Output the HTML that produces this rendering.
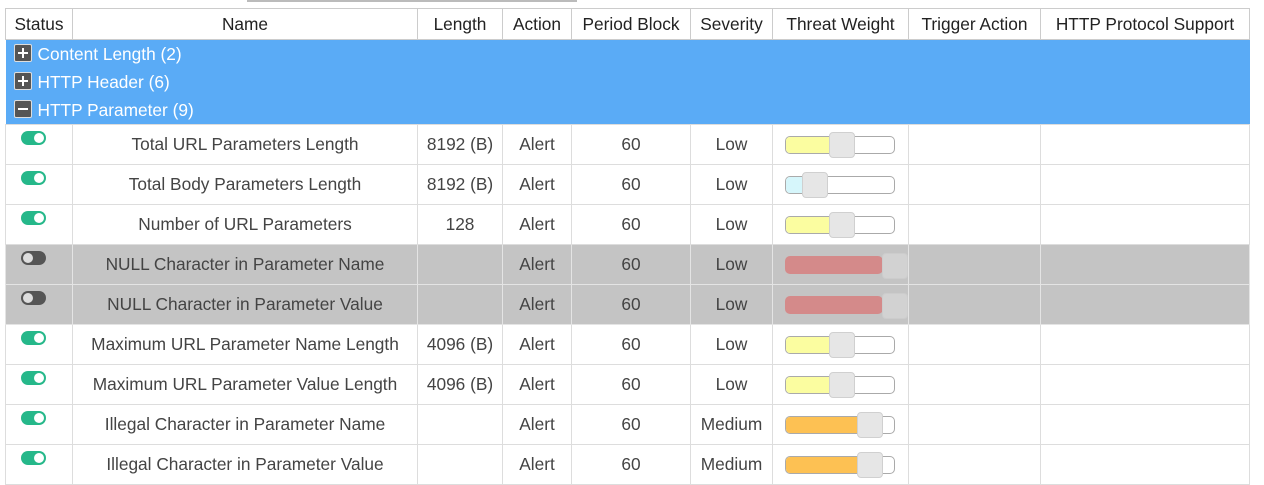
<!DOCTYPE html>
<html><head><meta charset="utf-8"><style>
body{margin:0;width:1264px;height:484px;overflow:hidden;background:#fff;font-family:"Liberation Sans",sans-serif;color:#333}
.topline{position:absolute;left:247px;top:0;width:330px;height:2px;background:#bbb}
table{position:absolute;left:5px;top:8px;border-collapse:collapse;table-layout:fixed;width:1245px}
td,th{border:1px solid #ddd;text-align:center;font-size:17.3px;padding:0;white-space:nowrap;overflow:hidden}
th{font-weight:normal;height:30px;border-color:#ccc;color:#222}
tr.g td{background:#5aabf6;color:#fff;text-align:left;height:28px;border:none;padding-left:8px}
tr.d td{height:39px;color:#444}
tr.off td{background:#c4c4c4;border-color:#e4e4e4}
.pm{display:inline-block;width:16px;height:16px;background:#555;border:1px solid #ddd;vertical-align:-2px;margin-right:6px;position:relative;border-radius:2px}
.pm:before{content:"";position:absolute;left:3px;top:7px;width:10px;height:2px;background:#fff}
.pm.p:after{content:"";position:absolute;left:7px;top:3px;width:2px;height:10px;background:#fff}
.tg{display:inline-block;width:25px;height:14px;border-radius:7px;background:#26b88a;position:relative;left:-6px;vertical-align:top;margin-top:-3px}
.tg:after{content:"";position:absolute;right:2px;top:2px;width:10px;height:10px;border-radius:50%;background:#fff}
.tg.o{background:#555}.tg.o:after{right:auto;left:2px;background:#ddd}
.sl{position:relative;width:108px;height:16px;margin-left:12px;border:1px solid #aaa;border-radius:5px;background:#fff}
.sl .f{position:absolute;left:0;top:0;bottom:0;border-radius:4px 0 0 4px}
.sl .t{position:absolute;top:-5px;width:24px;height:24px;background:#e6e6e6;border:1px solid #d0d0d0;border-radius:4px}
.sl.r{border:none;background:#d48a8a;width:98px;height:18px;border-radius:5px}
</style></head><body>
<div class="topline"></div>
<table>
<colgroup><col style="width:67px"><col style="width:345px"><col style="width:85px"><col style="width:69px"><col style="width:119px"><col style="width:82px"><col style="width:136px"><col style="width:132px"><col style="width:209px"></colgroup>
<tr><th>Status</th><th>Name</th><th>Length</th><th>Action</th><th>Period Block</th><th>Severity</th><th>Threat Weight</th><th>Trigger Action</th><th>HTTP Protocol Support</th></tr>
<tr class="g"><td colspan="9"><span class="pm p"></span>Content Length (2)</td></tr>
<tr class="g"><td colspan="9"><span class="pm p"></span>HTTP Header (6)</td></tr>
<tr class="g"><td colspan="9"><span class="pm"></span>HTTP Parameter (9)</td></tr>
<tr class="d"><td><span class="tg"></span></td><td>Total URL Parameters Length</td><td>8192 (B)</td><td>Alert</td><td>60</td><td>Low</td><td><div class="sl"><div class="f" style="width:45px;background:#fbfda0"></div><div class="t" style="left:43px"></div></div></td><td></td><td></td></tr>
<tr class="d"><td><span class="tg"></span></td><td>Total Body Parameters Length</td><td>8192 (B)</td><td>Alert</td><td>60</td><td>Low</td><td><div class="sl"><div class="f" style="width:18px;background:#d6f6fb"></div><div class="t" style="left:16px"></div></div></td><td></td><td></td></tr>
<tr class="d"><td><span class="tg"></span></td><td>Number of URL Parameters</td><td>128</td><td>Alert</td><td>60</td><td>Low</td><td><div class="sl"><div class="f" style="width:45px;background:#fbfda0"></div><div class="t" style="left:43px"></div></div></td><td></td><td></td></tr>
<tr class="d off"><td><span class="tg o"></span></td><td>NULL Character in Parameter Name</td><td></td><td>Alert</td><td>60</td><td>Low</td><td><div class="sl r"><div class="t" style="left:97px;top:-3px;background:#d2d2d2;border-color:#ccc"></div></div></td><td></td><td></td></tr>
<tr class="d off"><td><span class="tg o"></span></td><td>NULL Character in Parameter Value</td><td></td><td>Alert</td><td>60</td><td>Low</td><td><div class="sl r"><div class="t" style="left:97px;top:-3px;background:#d2d2d2;border-color:#ccc"></div></div></td><td></td><td></td></tr>
<tr class="d"><td><span class="tg"></span></td><td>Maximum URL Parameter Name Length</td><td>4096 (B)</td><td>Alert</td><td>60</td><td>Low</td><td><div class="sl"><div class="f" style="width:45px;background:#fbfda0"></div><div class="t" style="left:43px"></div></div></td><td></td><td></td></tr>
<tr class="d"><td><span class="tg"></span></td><td>Maximum URL Parameter Value Length</td><td>4096 (B)</td><td>Alert</td><td>60</td><td>Low</td><td><div class="sl"><div class="f" style="width:45px;background:#fbfda0"></div><div class="t" style="left:43px"></div></div></td><td></td><td></td></tr>
<tr class="d"><td><span class="tg"></span></td><td>Illegal Character in Parameter Name</td><td></td><td>Alert</td><td>60</td><td>Medium</td><td><div class="sl"><div class="f" style="width:73px;background:#fdc153"></div><div class="t" style="left:71px"></div></div></td><td></td><td></td></tr>
<tr class="d"><td><span class="tg"></span></td><td>Illegal Character in Parameter Value</td><td></td><td>Alert</td><td>60</td><td>Medium</td><td><div class="sl"><div class="f" style="width:73px;background:#fdc153"></div><div class="t" style="left:71px"></div></div></td><td></td><td></td></tr>
</table>
</body></html>
